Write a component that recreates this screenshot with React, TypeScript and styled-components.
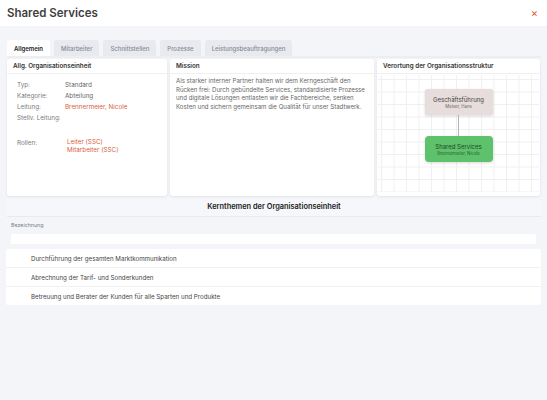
import { Fragment } from 'react';
import styled, { createGlobalStyle } from 'styled-components';

const GlobalStyle = createGlobalStyle`
  body {
    margin: 0;
    background: #f4f5f9;
    font-family: Inter, 'Noto Sans', sans-serif;
  }
`;

const Page = styled.div`
  min-height: 400px;
  background: #f4f5f9;
`;

const Header = styled.header`
  height: 26px;
  background: #fff;
  display: flex;
  align-items: center;
  justify-content: space-between;
  padding: 0 9px 0 7px;
`;

const Title = styled.h1`
  margin: 0;
  font-size: 11.5px;
  font-weight: 600;
  color: #3f3f3f;
`;

const Close = styled.button`
  border: 0;
  background: none;
  padding: 0;
  color: #e0553b;
  font-size: 11px;
  line-height: 1;
  font-family: inherit;
`;

const Body = styled.main`
  padding: 14px 6px 0 7px;
`;

const Tabs = styled.nav`
  display: flex;
  gap: 4px;
  height: 16px;
  border-bottom: 2px solid #eceef2;
`;

const Tab = styled.div<{ $active?: boolean }>`
  display: flex;
  align-items: center;
  padding: 0 7px;
  font-size: 6px;
  font-weight: ${(p) => (p.$active ? 600 : 500)};
  color: ${(p) => (p.$active ? '#222' : '#858a94')};
  background: ${(p) => (p.$active ? '#fff' : '#e8eaef')};
  border-radius: 3px 3px 0 0;
`;

const Cards = styled.section`
  display: grid;
  grid-template-columns: 160px 204px 163px;
  gap: 3px;
  margin-top: 1px;
`;

const Card = styled.div`
  background: #fff;
  border-radius: 3px;
  box-shadow: 0 1px 3px rgba(0, 0, 0, 0.08);
  height: 137px;
  display: flex;
  flex-direction: column;
  overflow: hidden;
`;

const CardTitle = styled.div`
  height: 14px;
  display: flex;
  align-items: center;
  padding: 0 6px;
  font-size: 6.3px;
  font-weight: 600;
  color: #333;
  border-bottom: 1px solid #f0f0f2;
  flex-shrink: 0;
`;

const InfoGrid = styled.div`
  display: grid;
  grid-template-columns: 48px auto;
  grid-auto-rows: 11px;
  align-items: center;
  padding: 5px 10px 0;
  font-size: 6.3px;
`;

const Label = styled.span`
  color: #7a7a7a;
`;

const Value = styled.span<{ $link?: boolean }>`
  color: ${(p) => (p.$link ? '#d9603b' : '#666')};
`;

const RoleRow = styled.div`
  display: grid;
  grid-template-columns: 50px auto;
  padding: 16px 10px 0;
  font-size: 6.3px;
`;

const RoleList = styled.div`
  display: flex;
  flex-direction: column;
  line-height: 8px;
  margin-top: -1px;
  color: #d9603b;
`;

const MissionText = styled.p`
  margin: 0;
  padding: 3px 6px;
  font-size: 6.1px;
  line-height: 8.5px;
  color: #666;
`;

const Chart = styled.div`
  flex: 1;
  margin: 1px 1px 4px;
  display: flex;
  flex-direction: column;
  align-items: center;
  padding-top: 14px;
  background-color: #fff;
  background-image: linear-gradient(#f0f0f0 1px, transparent 1px),
    linear-gradient(90deg, #f0f0f0 1px, transparent 1px);
  background-size: 12.5px 12.5px;
  background-position: 3px 4px;
`;

const Node = styled.div<{ $green?: boolean }>`
  width: 68px;
  height: 26px;
  border-radius: ${(p) => (p.$green ? '4px' : '2px')};
  background: ${(p) => (p.$green ? '#5dc26b' : '#e7dddd')};
  box-shadow: 0 1px 3px rgba(0, 0, 0, 0.15);
  display: flex;
  flex-direction: column;
  align-items: center;
  justify-content: center;
  gap: 1px;
`;

const NodeName = styled.span<{ $green?: boolean }>`
  font-size: 6px;
  color: ${(p) => (p.$green ? '#24452a' : '#444')};
`;

const NodeSub = styled.span<{ $green?: boolean }>`
  font-size: 4.3px;
  color: ${(p) => (p.$green ? '#2f5a35' : '#666')};
`;

const Connector = styled.div`
  width: 1px;
  height: 21px;
  background: #b5b5b5;
`;

const Topics = styled.section`
  margin-top: 1px;
`;

const TopicsTitle = styled.h2`
  margin: 0;
  height: 19px;
  display: flex;
  align-items: center;
  justify-content: center;
  font-size: 7.4px;
  font-weight: 600;
  color: #222;
  background: #f6f7fa;
  border-bottom: 1px solid #e9eaef;
`;

const ColumnLabel = styled.div`
  padding: 5px 4px 0;
  height: 12px;
  font-size: 5.3px;
  color: #7a7e86;
`;

const FilterBar = styled.div`
  margin: 0 5px 0 4px;
  height: 10px;
  background: #fff;
  border-radius: 1px;
`;

const TopicList = styled.ul`
  list-style: none;
  margin: 5px 0 0 -1px;
  padding: 0;
  background: #fff;
  border-radius: 2px;
`;

const TopicItem = styled.li`
  height: 18px;
  display: flex;
  align-items: center;
  padding-left: 25px;
  font-size: 6.2px;
  color: #444;
  border-bottom: 1px solid #f1f1f3;

  &:last-child {
    border-bottom: 0;
  }
`;

const info = [
  { label: 'Typ:', value: 'Standard' },
  { label: 'Kategorie:', value: 'Abteilung' },
  { label: 'Leitung:', value: 'Brennermeier, Nicole', link: true },
  { label: 'Stellv. Leitung:', value: '' },
];

const mission = [
  'Als starker interner Partner halten wir dem Kerngeschäft den',
  'Rücken frei: Durch gebündelte Services, standardisierte Prozesse',
  'und digitale Lösungen entlasten wir die Fachbereiche, senken',
  'Kosten und sichern gemeinsam die Qualität für unser Stadtwerk.',
];

const topics = [
  'Durchführung der gesamten Marktkommunikation',
  'Abrechnung der Tarif- und Sonderkunden',
  'Betreuung und Berater der Kunden für alle Sparten und Produkte',
];

const tabs = ['Allgemein', 'Mitarbeiter', 'Schnittstellen', 'Prozesse', 'Leistungsbeauftragungen'];

const App = () => (
  <Page>
    <GlobalStyle />
    <Header>
      <Title>Shared Services</Title>
      <Close type='button'>×</Close>
    </Header>
    <Body>
      <Tabs>
        {tabs.map((t, i) => (
          <Tab key={t} $active={i === 0}>
            {t}
          </Tab>
        ))}
      </Tabs>
      <Cards>
        <Card>
          <CardTitle>Allg. Organisationseinheit</CardTitle>
          <InfoGrid>
            {info.map(({ label, value, link }) => (
              <Fragment key={label}>
                <Label>{label}</Label>
                <Value $link={link}>{value}</Value>
              </Fragment>
            ))}
          </InfoGrid>
          <RoleRow>
            <Label>Rollen:</Label>
            <RoleList>
              <span>Leiter (SSC)</span>
              <span>Mitarbeiter (SSC)</span>
            </RoleList>
          </RoleRow>
        </Card>
        <Card>
          <CardTitle>Mission</CardTitle>
          <MissionText>
            {mission.map((line) => (
              <span key={line}>
                {line}
                <br />
              </span>
            ))}
          </MissionText>
        </Card>
        <Card>
          <CardTitle>Verortung der Organisationsstruktur</CardTitle>
          <Chart>
            <Node>
              <NodeName>Geschäftsführung</NodeName>
              <NodeSub>Meiser, Hans</NodeSub>
            </Node>
            <Connector />
            <Node $green>
              <NodeName $green>Shared Services</NodeName>
              <NodeSub $green>Brennermeier, Nicole</NodeSub>
            </Node>
          </Chart>
        </Card>
      </Cards>
      <Topics>
        <TopicsTitle>Kernthemen der Organisationseinheit</TopicsTitle>
        <ColumnLabel>Bezeichnung</ColumnLabel>
        <FilterBar />
        <TopicList>
          {topics.map((t) => (
            <TopicItem key={t}>{t}</TopicItem>
          ))}
        </TopicList>
      </Topics>
    </Body>
  </Page>
);

export default App;
